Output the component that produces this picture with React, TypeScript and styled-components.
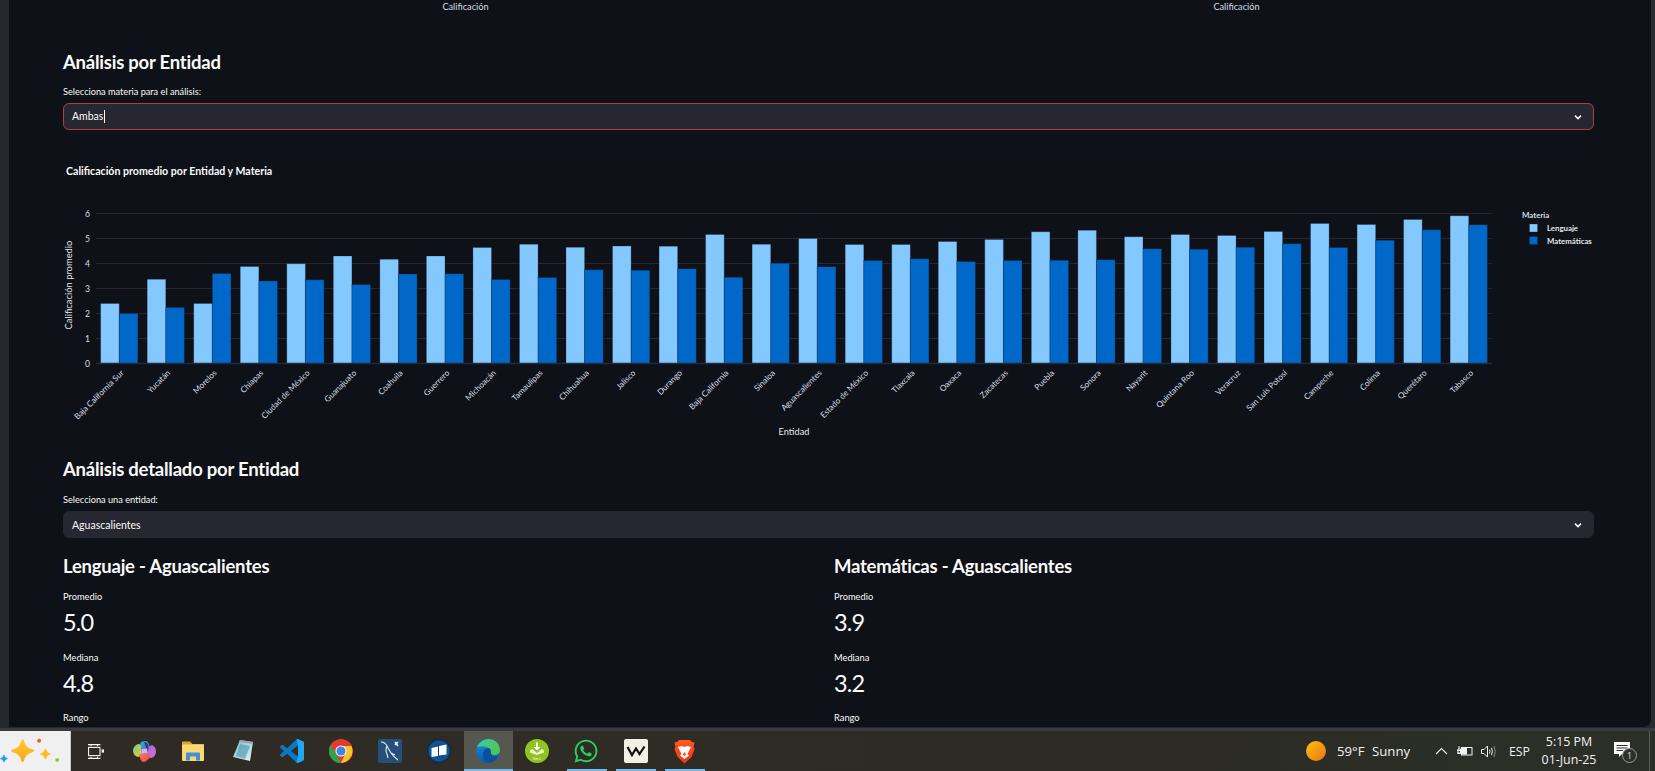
import React from "react";
import styled, { createGlobalStyle } from "styled-components";
import { FaWhatsapp } from "react-icons/fa";

const Global = createGlobalStyle`
  html, body { margin: 0; padding: 0; background: #0e1117; }
  #root { width: 1655px; height: 771px; overflow: hidden; }
  * { box-sizing: border-box; }
`;

const Page = styled.div`
  width: 1655px;
  height: 771px;
  display: flex;
  flex-direction: column;
  font-family: "Lato", "Noto Sans", sans-serif;
  color: #fafafa;
  background: #0e1117;
  overflow: hidden;
`;
const Win = styled.div`
  height: 728px;
  flex: none;
  display: flex;
  background: #26272f;
`;
const SideStrip = styled.div`
  width: 9px;
  flex: none;
  background: #26272f;
`;
const RightStrip = styled.div`
  width: 4px;
  flex: none;
  background: #2a2b31;
`;
const Main = styled.main`
  flex: 1;
  min-width: 0;
  height: 727px;
  background: #0e1117;
  padding: 0 57px 0 54px;
  overflow: hidden;
  border-bottom-right-radius: 8px;
`;
const WinFoot = styled.div`
  height: 3px;
  flex: none;
  background: #3b3b3d;
`;
const TwoCols = styled.div`
  display: grid;
  grid-template-columns: 755px 755px;
  column-gap: 16px;
`;
const AxisCaption = styled.div`
  height: 14px;
  line-height: 14px;
  padding-left: 50px;
  text-align: center;
  font-size: 9.2px;
  color: #d5dde6;
`;
const Heading = styled.h3<{ $mt: number }>`
  margin: ${(p) => p.$mt}px 0 0;
  height: 24px;
  line-height: 24px;
  font-size: 18.5px;
  letter-spacing: -0.23px;
  font-weight: 700;
  color: #fafafa;
`;
const FieldLabel = styled.div<{ $mt: number }>`
  margin-top: ${(p) => p.$mt}px;
  height: 14px;
  line-height: 14px;
  font-size: 9.2px;
  color: #fafafa;
`;
const Select = styled.div<{ $focus?: boolean }>`
  margin-top: 4px;
  height: 27px;
  border-radius: 6px;
  background: #262730;
  border: 1px solid ${(p) => (p.$focus ? "#b23c42" : "#262730")};
  display: flex;
  align-items: center;
  padding: 0 10px 0 8px;
  font-size: 10.5px;
  color: #fafafa;
`;
const SelectText = styled.span`
  flex: 1;
`;
const Caret = styled.span`
  display: inline-block;
  width: 1px;
  height: 13px;
  margin-left: 1px;
  background: #fafafa;
  vertical-align: middle;
`;
const ChartFigure = styled.figure`
  margin: 30px 0 0;
  height: 282px;
`;
const ChartSvg = styled.svg`
  display: block;
  font-family: "Lato", "Noto Sans", sans-serif;
`;
const Metric = styled.div<{ $mt: number }>`
  margin-top: ${(p) => p.$mt}px;
`;
const MetricLabel = styled.div`
  height: 14px;
  line-height: 14px;
  font-size: 9.3px;
  color: #fafafa;
`;
const MetricValue = styled.div`
  margin-top: 1px;
  height: 34px;
  line-height: 34px;
  font-size: 23.5px;
  letter-spacing: -0.8px;
  color: #fafafa;
`;

const Taskbar = styled.footer`
  height: 40px;
  flex: none;
  display: flex;
  align-items: stretch;
  background: linear-gradient(90deg, #2f2b24 0%, #2f2c25 35%, #2c2b25 70%, #2b2f26 90%, #2c2f28 100%);
  color: #f2f2f2;
  font-family: "Open Sans", "Noto Sans", sans-serif;
`;
const StartButton = styled.div`
  width: 71px;
  flex: none;
  background: #f0f0f0;
  border-right: 1px solid #c9c9c9;
  display: flex;
  align-items: center;
  justify-content: center;
`;
const TaskList = styled.div`
  display: flex;
`;
const TaskSlot = styled.div<{ $active?: boolean; $open?: boolean }>`
  width: 49.1px;
  flex: none;
  display: flex;
  align-items: center;
  justify-content: center;
  position: relative;
  background: ${(p) => (p.$active ? "#56574f" : "transparent")};
  &::after {
    content: "";
    display: ${(p) => (p.$open ? "block" : "none")};
    position: absolute;
    left: ${(p) => (p.$active ? 0 : 5)}px;
    right: ${(p) => (p.$active ? 0 : 4)}px;
    bottom: 0;
    height: 2px;
    background: #76b9ed;
  }
`;
const Tray = styled.div`
  margin-left: auto;
  display: flex;
  align-items: center;
  height: 100%;
`;
const Weather = styled.div`
  display: flex;
  align-items: center;
  font-size: 13.2px;
  width: 129px;
  flex: none;
`;
const WeatherTemp = styled.span`
  margin-left: 11px;
  width: 35px;
`;
const TrayIcons = styled.div`
  display: flex;
  align-items: center;
  gap: 8.5px;
  width: 74px;
  flex: none;
`;
const Lang = styled.div`
  font-size: 12.3px;
  width: 28px;
  flex: none;
`;
const Clock = styled.div`
  width: 64px;
  flex: none;
  font-size: 12.4px;
  line-height: 18px;
  text-align: center;
`;
const Notify = styled.div`
  width: 49px;
  flex: none;
  height: 100%;
  display: flex;
  align-items: center;
  padding-left: 11px;
  border-right: 1px solid #5c5d56;
  margin-right: 5px;
`;

const data: [string, number, number][] = [
  ["Baja California Sur", 2.4, 2.0], ["Yucatán", 3.37, 2.24], ["Morelos", 2.4, 3.6], ["Chiapas", 3.88, 3.3],
  ["Ciudad de México", 3.99, 3.35], ["Guanajuato", 4.3, 3.16], ["Coahuila", 4.17, 3.58], ["Guerrero", 4.3, 3.59],
  ["Michoacán", 4.64, 3.36], ["Tamaulipas", 4.77, 3.44], ["Chihuahua", 4.65, 3.75], ["Jalisco", 4.7, 3.73],
  ["Durango", 4.69, 3.79], ["Baja California", 5.16, 3.45], ["Sinaloa", 4.77, 4.01], ["Aguascalientes", 5.0, 3.87],
  ["Estado de México", 4.76, 4.12], ["Tlaxcala", 4.76, 4.19], ["Oaxaca", 4.88, 4.08], ["Zacatecas", 4.96, 4.12],
  ["Puebla", 5.27, 4.13], ["Sonora", 5.33, 4.15], ["Nayarit", 5.07, 4.59], ["Quintana Roo", 5.16, 4.57],
  ["Veracruz", 5.12, 4.65], ["San Luis Potosí", 5.28, 4.79], ["Campeche", 5.6, 4.64], ["Colima", 5.56, 4.93],
  ["Querétaro", 5.76, 5.35], ["Tabasco", 5.91, 5.55],
];

function Chart() {
  const ox = 63;
  const oy = 160;
  const left = 96 - ox;
  const right = 1492 - ox;
  const base = 363.5 - oy;
  const unit = 25;
  const band = (right - left) / data.length;
  const bw = band * 0.4;
  return (
    <ChartSvg width={1531} height={282} viewBox="0 0 1531 282">
      <text x={3} y={15} fontSize={10.6} fontWeight={700} fill="#fafafa">Calificación promedio por Entidad y Materia</text>
      {[1, 2, 3, 4, 5, 6].map((v) => (
        <line key={v} x1={left} x2={right} y1={base - v * unit} y2={base - v * unit} stroke="#262730" strokeWidth={1} />
      ))}
      {[0, 1, 2, 3, 4, 5, 6].map((v) => (
        <text key={v} x={left - 6} y={base - v * unit + 3} fontSize={8.6} textAnchor="end" fill="#d5dde6">{v}</text>
      ))}
      {data.map(([name, l, m], i) => {
        const x0 = left + band * i + band * 0.1;
        const cx = left + band * i + band / 2;
        return (
          <g key={name}>
            <rect x={x0} y={base - l * unit} width={bw} height={l * unit} fill="#83c9ff" stroke="#0e1117" strokeOpacity={0.25} strokeWidth={1} />
            <rect x={x0 + bw} y={base - m * unit} width={bw} height={m * unit} fill="#0068c9" stroke="#0e1117" strokeOpacity={0.25} strokeWidth={1} />
            <text transform={`translate(${cx + 5} ${base + 10}) rotate(-45)`} fontSize={8.2} textAnchor="end" fill="#d5dde6">{name}</text>
          </g>
        );
      })}
      <line x1={left} x2={right} y1={base} y2={base} stroke="#1f2b3e" strokeWidth={1.5} />
      <text transform={`translate(${69 - ox + 3} ${285 - oy}) rotate(-90)`} fontSize={9.4} textAnchor="middle" fill="#e4e8ec">Calificación promedio</text>
      <text x={794 - ox} y={435 - oy} fontSize={9.2} textAnchor="middle" fill="#e4e8ec">Entidad</text>
      <text x={1522 - ox} y={218 - oy} fontSize={7.9} fontWeight={700} fill="#d5dde6">Materia</text>
      <rect x={1529.5 - ox} y={224 - oy} width={8} height={8} fill="#83c9ff" stroke="#0e1117" strokeOpacity={0.25} />
      <text x={1547 - ox} y={231 - oy} fontSize={7.8} fontWeight={700} fill="#e4e8ec">Lenguaje</text>
      <rect x={1529.5 - ox} y={236.5 - oy} width={8} height={8} fill="#0068c9" stroke="#0e1117" strokeOpacity={0.25} />
      <text x={1547 - ox} y={244 - oy} fontSize={7.8} fontWeight={700} fill="#e4e8ec">Matemáticas</text>
    </ChartSvg>
  );
}

const Chevron = () => (
  <svg width="10" height="10" viewBox="0 0 10 10" fill="none">
    <path d="M2 3.6 L5 6.6 L8 3.6" stroke="#fafafa" strokeWidth="1.5" />
  </svg>
);

const Star = ({ cx, cy, r, fill }: { cx: number; cy: number; r: number; fill: string }) => (
  <path
    d={`M${cx} ${cy - r} Q${cx + r * 0.18} ${cy - r * 0.18} ${cx + r} ${cy} Q${cx + r * 0.18} ${cy + r * 0.18} ${cx} ${cy + r} Q${cx - r * 0.18} ${cy + r * 0.18} ${cx - r} ${cy} Q${cx - r * 0.18} ${cy - r * 0.18} ${cx} ${cy - r}Z`}
    fill={fill}
    stroke={fill}
    strokeWidth={r * 0.25}
    strokeLinejoin="round"
  />
);

const SparkleIcon = () => (
  <svg width="71" height="40" viewBox="0 0 71 40">
    <defs>
      <linearGradient id="sg" x1="0" y1="0" x2="0" y2="1">
        <stop offset="0" stopColor="#ffc928" />
        <stop offset="1" stopColor="#f9a825" />
      </linearGradient>
    </defs>
    <Star cx={23} cy={19.7} r={10.2} fill="url(#sg)" />
    <Star cx={46} cy={23} r={4.8} fill="#fbbd2a" />
    <Star cx={4} cy={27.7} r={3.5} fill="#1e9de6" />
    <circle cx={39.7} cy={9.7} r={2} fill="#ea5a2a" />
    <circle cx={58} cy={29} r={2} fill="#93c83e" />
  </svg>
);
const TaskViewIcon = () => (
  <svg width="16" height="15" viewBox="0 0 16 15" fill="none" stroke="#f4f4f4" strokeWidth="1.1">
    <path d="M0 .6H12.5M0 14.4H12.5M3 .6V2.2M9.5 .6V2.2M3 12.8V14.4M9.5 12.8V14.4" />
    <rect x=".6" y="3.4" width="11.4" height="8.2" />
    <rect x="13.6" y="5.4" width="2.4" height="3.2" fill="#f4f4f4" stroke="none" />
  </svg>
);
const CopilotIcon = () => (
  <svg width="23" height="21" viewBox="0 0 23 21">
    <defs>
      <linearGradient id="c1" x1="0" y1="0" x2="1" y2="1">
        <stop offset="0" stopColor="#1fb6e8" />
        <stop offset=".6" stopColor="#3f7fe8" />
        <stop offset="1" stopColor="#6a5be0" />
      </linearGradient>
      <linearGradient id="c2" x1="0" y1="0" x2="1" y2="1">
        <stop offset="0" stopColor="#8a6cf0" />
        <stop offset="1" stopColor="#e86bc0" />
      </linearGradient>
      <linearGradient id="c3" x1="0" y1="0" x2="1" y2="1">
        <stop offset="0" stopColor="#6fd08a" />
        <stop offset="1" stopColor="#f2c53b" />
      </linearGradient>
      <linearGradient id="c4" x1="0" y1="0" x2="1" y2="1">
        <stop offset="0" stopColor="#f5883f" />
        <stop offset="1" stopColor="#ee3f6a" />
      </linearGradient>
    </defs>
    <path d="M7 2 Q9 0 12 0 Q15 0 16 3 L17 8 L9 9Z" fill="url(#c1)" />
    <path d="M13 7 L19 4 Q23 6 23 11 Q22.5 16 18 17 Q15 17 14 14Z" fill="url(#c2)" />
    <path d="M0 10 Q0 5 5 3 Q8 2.5 8.5 6 L8 15 L5 16 Q0.5 15 0 10Z" fill="url(#c3)" />
    <path d="M6 13 L15 12 L17 16 Q14 21 10 21 Q7.5 20.5 6 13Z" fill="url(#c4)" />
    <path d="M11 1 Q14 1 15 4 L15.5 8 L14 12 L13 6Z" fill="#2f2b24" opacity=".75" />
    <path d="M8.5 8 L14 7.5 L14.5 12 L8 13Z" fill="#c9b6f2" />
  </svg>
);
const FolderIcon = () => (
  <svg width="23" height="20" viewBox="0 0 23 20">
    <path d="M0 1.5 Q0 .5 1 .5H8L10.5 3H22V6H0Z" fill="#e2a41f" />
    <rect x="0" y="3.5" width="22" height="16.5" rx="1" fill="#fcd873" />
    <path d="M4 19.5V12.5Q4 11.5 5 11.5H17Q18 11.5 18 12.5V19.5H14V15.5H8V19.5Z" fill="#3d92d8" />
  </svg>
);
const NotepadIcon = () => (
  <svg width="22" height="24" viewBox="0 0 22 24">
    <defs>
      <linearGradient id="n1" x1="0" y1="0" x2="1" y2="1">
        <stop offset="0" stopColor="#6cc0d0" />
        <stop offset="1" stopColor="#e8f2f5" />
      </linearGradient>
    </defs>
    <path d="M8 1 L21 3 L18 22 L1 18Z" fill="url(#n1)" />
    <path d="M8 1 L21 3 L20.5 5 L7 3Z" fill="#9aa6ad" />
    <path d="M8 5 L18 7 L13 20 L4 17Z" fill="#4b96a8" opacity=".6" />
  </svg>
);
const VSCodeIcon = () => (
  <svg width="24" height="24" viewBox="0 0 24 24">
    <path
      fill="#0a78c8"
      d="M23.15 2.587L18.21.21a1.494 1.494 0 0 0-1.705.29l-9.46 8.63-4.12-3.128a.999.999 0 0 0-1.276.057L.327 7.261A1 1 0 0 0 .326 8.74L3.899 12 .326 15.26a1 1 0 0 0 .001 1.479L1.65 17.94a.999.999 0 0 0 1.276.057l4.12-3.128 9.46 8.63a1.492 1.492 0 0 0 1.704.29l4.942-2.377A1.5 1.5 0 0 0 24 20.06V3.939a1.5 1.5 0 0 0-.85-1.352zm-5.146 14.861L10.826 12l7.178-5.448v10.896z"
    />
    <path
      fill="#23a8f2"
      d="M23.15 2.587L18.21.21a1.5 1.5 0 0 0-1.71.29L18 6.552v10.896L16.5 23.5a1.49 1.49 0 0 0 1.71.29l4.942-2.377A1.5 1.5 0 0 0 24 20.06V3.939a1.5 1.5 0 0 0-.85-1.352z"
    />
  </svg>
);
const ChromeIcon = () => (
  <svg width="24" height="24" viewBox="0 0 24 24">
    <circle cx="12" cy="12" r="12" fill="#e23b2e" />
    <path d="M1.6 6 L7.2 15 L12 24 A12 12 0 0 1 1.6 6Z" fill="#2fa24f" />
    <path d="M12 7 H22.4 A12 12 0 0 1 12 24 L16.5 14.5Z" fill="#fbc62c" />
    <circle cx="12" cy="12" r="5.6" fill="#f4f4f4" />
    <circle cx="12" cy="12" r="4.5" fill="#3f86ec" />
  </svg>
);
const MySqlIcon = () => (
  <svg width="24" height="24" viewBox="0 0 24 24">
    <rect width="24" height="24" rx="2" fill="#24507a" />
    <path d="M3 3 Q7 3 9 7 Q11 11 13 14 Q15 17 20 21 M9 7 Q7 11 9 15 L10 19 M13 14 L17 16" fill="none" stroke="#e4edf3" strokeWidth="1.1" />
    <path d="M17 3 L20 7 M20 3 L17 6" stroke="#eef3f6" strokeWidth="1.5" />
  </svg>
);
const DarkCardsIcon = () => (
  <svg width="24" height="24" viewBox="0 0 24 24">
    <defs>
      <radialGradient id="d1" cx=".5" cy=".5" r=".55">
        <stop offset="0" stopColor="#123070" />
        <stop offset=".72" stopColor="#0f5a98" />
        <stop offset="1" stopColor="#03060f" />
      </radialGradient>
    </defs>
    <circle cx="12" cy="12" r="12" fill="url(#d1)" />
    <path d="M4.5 9 L11 7.5 L11 17 L4.5 18Z" fill="#f6f6f6" />
    <path d="M12 7 L19.5 5.5 L19.5 15.5 L12 16.5Z" fill="#fdfdfd" />
  </svg>
);
const EdgeIcon = () => (
  <svg width="24" height="24" viewBox="0 0 24 24">
    <defs>
      <linearGradient id="e1" x1="0" y1="0" x2="1" y2="1">
        <stop offset="0" stopColor="#37d0a8" />
        <stop offset="1" stopColor="#55c23e" />
      </linearGradient>
      <linearGradient id="e2" x1="0" y1="0" x2="0" y2="1">
        <stop offset="0" stopColor="#1f8fe0" />
        <stop offset="1" stopColor="#0b5aa8" />
      </linearGradient>
    </defs>
    <circle cx="12" cy="12" r="12" fill="url(#e2)" />
    <path d="M1 8 Q5 0.5 12.5 0 Q22 0 24 10 Q24 16 18 16 Q14.5 16 15 13.5 Q15.5 11 13 9 Q7 6 1 8Z" fill="url(#e1)" />
    <path d="M7 14 Q8 9.5 13 9 Q15.5 11 15 13.5 Q14.5 17 18.5 17.5 Q21 17.5 22.5 16.5 Q19 23.5 12 24 Q6.5 22 7 14Z" fill="#0f4e9a" />
  </svg>
);
const XmlIcon = () => (
  <svg width="24" height="24" viewBox="0 0 24 24">
    <circle cx="12" cy="12" r="12" fill="#8fc31f" />
    <path d="M11 3.5H13V8H15.5L12 11.5L8.5 8H11Z" fill="#fff" />
    <path d="M5 11.5 L7 10 L12 14 L17 10 L19 11.5 L19 13.5 L12 16 L5 13.5Z" fill="#eef5d5" />
    <text x="12" y="21" fontSize="3.6" textAnchor="middle" fill="#fff" fontFamily="Liberation Sans, sans-serif">Xm L</text>
  </svg>
);
const WIcon = () => (
  <svg width="24" height="24" viewBox="0 0 24 24">
    <rect width="24" height="24" rx="2" fill="#f5f0e6" />
    <path d="M3.5 8 L8 16 L12 9.5 L15.5 15 L20.5 7.5" fill="none" stroke="#111" strokeWidth="2.2" />
  </svg>
);
const BraveIcon = () => (
  <svg width="21" height="25" viewBox="0 0 21 25">
    <defs>
      <linearGradient id="b1" x1="0" y1="0" x2="0" y2="1">
        <stop offset="0" stopColor="#ff5a1f" />
        <stop offset="1" stopColor="#f0341a" />
      </linearGradient>
    </defs>
    <path d="M5 1 H16 L18 3 L20.5 3.5 L19.5 8 L20.5 10 L17.5 18 L10.5 24.5 L3.5 18 L.5 10 L1.5 8 L.5 3.5 L3 3Z" fill="url(#b1)" />
    <path d="M4 8 L8 7 L10.5 8 L13 7 L17 8 L15 12 L13.5 15 L15 16.5 L10.5 20 L6 16.5 L7.5 15 L6 12Z" fill="#fff" />
    <path d="M10.5 13 L8.5 15.5 L10.5 17 L12.5 15.5Z" fill="#ff5a1f" />
  </svg>
);
const SunIcon = () => (
  <svg width="20" height="20" viewBox="0 0 20 20">
    <defs>
      <linearGradient id="sun" x1="0" y1="0" x2="1" y2="1">
        <stop offset="0" stopColor="#ffc400" />
        <stop offset="1" stopColor="#e9711c" />
      </linearGradient>
    </defs>
    <circle cx="10" cy="10" r="10" fill="url(#sun)" />
  </svg>
);
const ChevronUp = () => (
  <svg width="13" height="8" viewBox="0 0 13 8" fill="none"><path d="M1 7 L6.5 1.5 L12 7" stroke="#f2f2f2" strokeWidth="1.1" /></svg>
);
const BatteryIcon = () => (
  <svg width="16" height="12" viewBox="0 0 16 12" fill="none" stroke="#f2f2f2" strokeWidth="1">
    <rect x="4.5" y="2.5" width="10.5" height="7.5" />
    <path d="M0 5.5H4M0 8H4M2 1V4M1 4H3.5V8.5H1Z" />
    <rect x="5" y="3" width="5" height="6.5" fill="#f2f2f2" stroke="none" />
  </svg>
);
const SpeakerIcon = () => (
  <svg width="16" height="13" viewBox="0 0 16 13" fill="none" stroke="#f2f2f2" strokeWidth="1">
    <path d="M.5 4.5H3L6.5 1V12L3 8.5H.5Z" />
    <path d="M8.5 4.5Q9.6 6.5 8.5 8.5M10.5 2.8Q12.3 6.5 10.5 10.2" />
    <path d="M13 1Q15.6 6.5 13 12" stroke="#8a8a86" />
  </svg>
);
const NotifyIcon = () => (
  <svg width="26" height="24" viewBox="0 0 26 24">
    <path d="M2 3 H18 V15 H10 L7 18 V15 H2Z" fill="#f8f8f8" />
    <path d="M4.5 6.5H15.5M4.5 9H15.5M4.5 11.5H11" stroke="#333" strokeWidth="1" />
    <circle cx="17.5" cy="16.5" r="7" fill="#2e2f28" stroke="#9b9b97" strokeWidth="1" />
    <text x="17.5" y="20" fontSize="9.5" textAnchor="middle" fill="#dcdcdc" fontFamily="Open Sans, sans-serif">1</text>
  </svg>
);

export default function App() {
  return (
    <Page>
      <Global />
      <Win>
        <SideStrip />
        <Main>
          <TwoCols>
            <AxisCaption>Calificación</AxisCaption>
            <AxisCaption>Calificación</AxisCaption>
          </TwoCols>
          <Heading $mt={36}>Análisis por Entidad</Heading>
          <FieldLabel $mt={11}>Selecciona materia para el análisis:</FieldLabel>
          <Select $focus>
            <SelectText>Ambas<Caret /></SelectText>
            <Chevron />
          </Select>
          <ChartFigure><Chart /></ChartFigure>
          <Heading $mt={15}>Análisis detallado por Entidad</Heading>
          <FieldLabel $mt={12}>Selecciona una entidad:</FieldLabel>
          <Select>
            <SelectText>Aguascalientes</SelectText>
            <Chevron />
          </Select>
          <TwoCols>
            <div>
              <Heading $mt={16}>Lenguaje - Aguascalientes</Heading>
              <Metric $mt={12}><MetricLabel>Promedio</MetricLabel><MetricValue>5.0</MetricValue></Metric>
              <Metric $mt={12}><MetricLabel>Mediana</MetricLabel><MetricValue>4.8</MetricValue></Metric>
              <Metric $mt={11}><MetricLabel>Rango</MetricLabel></Metric>
            </div>
            <div>
              <Heading $mt={16}>Matemáticas - Aguascalientes</Heading>
              <Metric $mt={12}><MetricLabel>Promedio</MetricLabel><MetricValue>3.9</MetricValue></Metric>
              <Metric $mt={12}><MetricLabel>Mediana</MetricLabel><MetricValue>3.2</MetricValue></Metric>
              <Metric $mt={11}><MetricLabel>Rango</MetricLabel></Metric>
            </div>
          </TwoCols>
        </Main>
        <RightStrip />
      </Win>
      <WinFoot />
      <Taskbar>
        <StartButton><SparkleIcon /></StartButton>
        <TaskList>
          <TaskSlot><TaskViewIcon /></TaskSlot>
          <TaskSlot><CopilotIcon /></TaskSlot>
          <TaskSlot><FolderIcon /></TaskSlot>
          <TaskSlot><NotepadIcon /></TaskSlot>
          <TaskSlot><VSCodeIcon /></TaskSlot>
          <TaskSlot><ChromeIcon /></TaskSlot>
          <TaskSlot><MySqlIcon /></TaskSlot>
          <TaskSlot><DarkCardsIcon /></TaskSlot>
          <TaskSlot $active $open><EdgeIcon /></TaskSlot>
          <TaskSlot><XmlIcon /></TaskSlot>
          <TaskSlot $open><FaWhatsapp size={26} color="#25d366" /></TaskSlot>
          <TaskSlot $open><WIcon /></TaskSlot>
          <TaskSlot $open><BraveIcon /></TaskSlot>
        </TaskList>
        <Tray>
          <Weather>
            <SunIcon />
            <WeatherTemp>59°F</WeatherTemp>
            <span>Sunny</span>
          </Weather>
          <TrayIcons>
            <ChevronUp />
            <BatteryIcon />
            <SpeakerIcon />
          </TrayIcons>
          <Lang>ESP</Lang>
          <Clock>5:15 PM<br />01-Jun-25</Clock>
          <Notify><NotifyIcon /></Notify>
        </Tray>
      </Taskbar>
    </Page>
  );
}
